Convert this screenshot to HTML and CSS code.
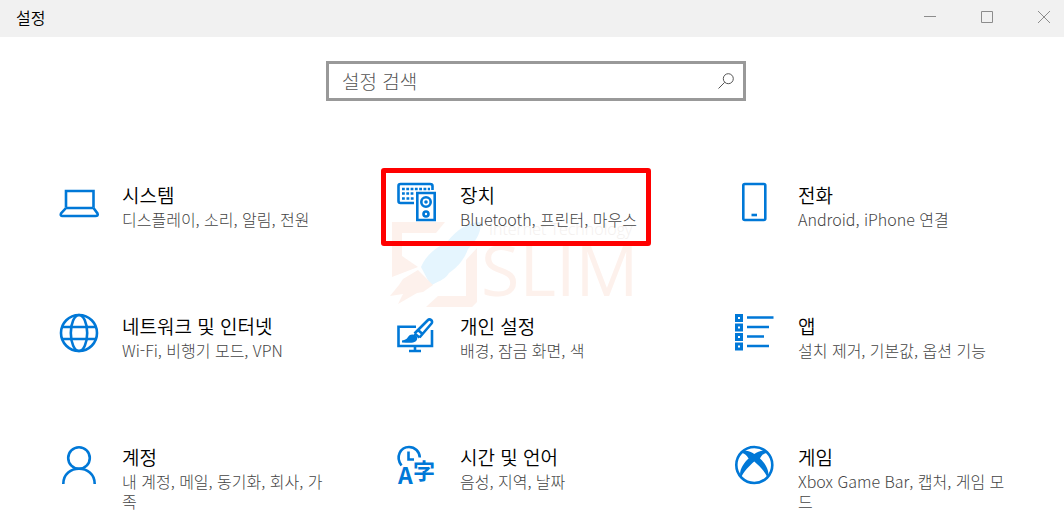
FILE: index.html
```html
<!DOCTYPE html>
<html lang="ko">
<head>
<meta charset="utf-8">
<meta name="viewport" content="width=device-width, initial-scale=1">
<title>설정</title>
<link rel="stylesheet" href="styles.css">
</head>
<body>
<header class="titlebar">
  <h1 class="titlebar-name">설정</h1>
  <div class="window-controls">
    <button class="window-button" type="button" aria-label="최소화"><svg viewBox="0 0 12 12"><path d="M0 5.5h12"/></svg></button>
    <button class="window-button" type="button" aria-label="최대화"><svg viewBox="0 0 12 12"><path d="M.5.5h11v11H.5z"/></svg></button>
    <button class="window-button" type="button" aria-label="닫기"><svg viewBox="0 0 12 12"><path d="M0 0l12 12M12 0L0 12"/></svg></button>
  </div>
</header>
<main>
  <form class="search" role="search">
    <input class="search-input" type="text" placeholder="설정 검색" aria-label="설정 검색">
    <button class="search-button" type="submit" aria-label="검색"><svg viewBox="0 0 16 16"><circle cx="10.3" cy="5.7" r="5"/><path d="M6.7 9.3L.5 15.5"/></svg></button>
  </form>
  <nav class="tiles" aria-label="설정 범주">
    <a class="tile" href="#system">
      <svg class="icon" viewBox="0 0 40 40"><path d="M7 25.5V9h27.5v16.5M7 26h27.5M7 26L2 31.5Q1 34 3.5 34h33Q39.5 34 38.500 31.5L34.5 26"/></svg>
      <span class="tile-text"><span class="tile-title">시스템</span><span class="tile-desc">디스플레이, 소리, 알림, 전원</span></span>
    </a>
    <a class="tile" href="#devices">
      <svg class="watermark" viewBox="0 0 260 90" aria-hidden="true">
        <path class="mark-warm" d="M3 2H56L47 13H13V36L29 47L3 57Z"/>
        <path class="mark-blue" d="M32 47C38 33 49 27 58 22C68 9 80 2 92 2C92 11 89 19 79 29C76 38 69 47 60 53C55 61 48 61 42 66Z"/>
        <path class="mark-warm" d="M29 50L44 65L34 72L28 73L9 84L14 74L1 76L10 65L14 59Z"/>
        <path class="mark-warm" d="M88 28V82L83 87H37L49 76H77V40Z"/>
        <text class="mark-caption" x="100" y="15">Internet Technology</text>
        <text class="mark-name" x="92" y="76">SLIM</text>
      </svg>
      <svg class="icon" viewBox="0 0 40 40"><path d="M17 21H3.500Q1.500 21 1.500 19V4Q1.500 2 3.500 2H33Q35.500 2 35.500 4V8"/><path d="M5 7H33M5 11.500H17M5 16.500H8M9.500 16.500H17" stroke-dasharray="2.800 1.500"/><path d="M20.300 11H37.700V38H20.300z"/><circle cx="29" cy="20" r="4.700"/><circle class="solid" cx="29" cy="20" r="1.800"/><circle cx="29" cy="32" r="2.500"/></svg>
      <span class="tile-text"><span class="tile-title">장치</span><span class="tile-desc">Bluetooth, 프린터, 마우스</span></span>
      <span class="highlight"></span>
    </a>
    <a class="tile" href="#phone">
      <svg class="icon" viewBox="0 0 40 40"><rect x="8.300" y="2" width="22" height="36" rx="1.500"/><path d="M16.500 33h5.500"/></svg>
      <span class="tile-text"><span class="tile-title">전화</span><span class="tile-desc">Android, iPhone 연결</span></span>
    </a>
    <a class="tile" href="#network">
      <svg class="icon" viewBox="0 0 40 40"><circle cx="20" cy="20" r="18"/><ellipse cx="20" cy="20" rx="8.200" ry="18"/><path d="M3 14h34M3 26h34"/></svg>
      <span class="tile-text"><span class="tile-title">네트워크 및 인터넷</span><span class="tile-desc">Wi-Fi, 비행기 모드, VPN</span></span>
    </a>
    <a class="tile" href="#personalization">
      <svg class="icon" viewBox="0 0 40 40"><path d="M19 13.700H1.500V33H35V17M18 33v5M12 38h12"/><path d="M17.500 20.500L30.500 7.500C33 5 36.500 8 34.500 10.500L22.500 24.500M17.500 20.500L22.500 24.500M21 17L25.500 21"/><path class="solid" d="M5 27.500C12 27 10 21.500 15.500 21.500C20 21.500 22 26 18.500 28.500C16 30.500 10 29.500 5 29.500Z"/></svg>
      <span class="tile-text"><span class="tile-title">개인 설정</span><span class="tile-desc">배경, 잠금 화면, 색</span></span>
    </a>
    <a class="tile" href="#apps">
      <svg class="icon" viewBox="0 0 40 40"><g class="thick"><path d="M1.500 2.500h5v5h-5zM1.500 12h5v5h-5zM1.500 21.500h5v5h-5zM1.500 31h5v5h-5z"/></g><path d="M12 4.500h26.500M12 14h22M12 23.500h17M12 33h22"/></svg>
      <span class="tile-text"><span class="tile-title">앱</span><span class="tile-desc">설치 제거, 기본값, 옵션 기능</span></span>
    </a>
    <a class="tile" href="#accounts">
      <svg class="icon" viewBox="0 0 40 40"><circle cx="20" cy="14" r="10.800"/><path d="M4.300 40C4.300 19.700 35.700 19.700 35.700 40"/></svg>
      <span class="tile-text"><span class="tile-title">계정</span><span class="tile-desc">내 계정, 메일, 동기화, 회사, 가족</span></span>
    </a>
    <a class="tile" href="#time">
      <svg class="icon" viewBox="0 0 40 40"><path d="M4.500 21.500C-2 13 3.500 3 12 3C18 3 22.500 7.500 22.800 13.500M11.500 7.500V15.500H17"/><text class="glyph-latin" x="1" y="40">A</text><text class="glyph-han" x="16" y="35">字</text></svg>
      <span class="tile-text"><span class="tile-title">시간 및 언어</span><span class="tile-desc">음성, 지역, 날짜</span></span>
    </a>
    <a class="tile" href="#gaming">
      <svg class="icon" viewBox="0 0 40 40"><circle cx="19.300" cy="21" r="18"/><path class="solid" d="M7.500 7.500C11 5.500 16 8 19.300 10C22.600 8 27.600 5.500 31 7.500L32 9C29 9 26.500 11.500 25 14.500C30.500 19.500 35.500 28 32.500 34C30.500 28 24 21.500 19.300 17.500C14.600 21.500 8 28 6 34C3 28 8 19.500 13.600 14.500C12 11.500 9.600 9 6.500 9Z"/></svg>
      <span class="tile-text"><span class="tile-title">게임</span><span class="tile-desc">Xbox Game Bar, 캡처, 게임 모드</span></span>
    </a>
  </nav>
</main>
</body>
</html>
```
FILE: styles.css
```css
* { box-sizing: border-box; }

body {
  margin: 0;
  background: #fff;
  color: #000;
  font-family: "Noto Sans CJK KR", sans-serif;
  font-weight: 300;
}

button { border: 0; padding: 0; background: none; }

.titlebar {
  display: flex;
  justify-content: space-between;
  align-items: flex-start;
  height: 37px;
  padding-left: 16px;
  background: #f1f1f1;
}

.titlebar-name {
  margin: 0;
  font-size: 16px;
  font-weight: 350;
  line-height: 34px;
}

.window-controls { display: flex; gap: 17px; }

.window-button {
  display: grid;
  place-items: center;
  width: 40px;
  height: 34px;
}

.window-button svg {
  width: 12px;
  height: 12px;
  fill: none;
  stroke: #8c8c8c;
}

.search {
  display: flex;
  align-items: center;
  width: 420px;
  max-width: 100%;
  height: 40px;
  margin: 24px auto 0;
  border: 3px solid #999;
  position: relative;
  left: 4px;
}

.search-input {
  flex: 1;
  min-width: 0;
  height: 34px;
  padding: 0 0 2px 13px;
  border: 0;
  outline: 0;
  background: none;
  font: inherit;
  font-size: 19px;
}

.search-input::placeholder { color: #555; opacity: 1; }

.search-button {
  display: grid;
  place-items: center;
  width: 34px;
  height: 34px;
}

.search-button svg {
  width: 16px;
  height: 16px;
  fill: none;
  stroke: #555;
}

.tiles {
  display: grid;
  grid-template-columns: repeat(3, 1fr);
  gap: 70px 48px;
  padding: 67px 55px 0 43px;
}

.tile {
  position: relative;
  display: flex;
  align-items: flex-start;
  gap: 23px;
  padding: 14px 0 0 16px;
  color: inherit;
  text-decoration: none;
}

.icon {
  position: relative;
  flex: none;
  width: 40px;
  height: 40px;
  overflow: visible;
  fill: none;
  stroke: #0078d7;
  stroke-width: 2.6;
}

.icon .solid { fill: #0078d7; stroke: none; }
.icon .thick { stroke-width: 3; }

.icon text {
  fill: #0078d7;
  stroke: none;
  font-weight: 700;
}

.glyph-latin { font-size: 23px; }
.glyph-han { font-size: 22px; }

.tile-text {
  position: relative;
  display: flex;
  flex-direction: column;
  gap: 1px;
}

.tile-title {
  font-size: 19px;
  font-weight: 350;
  line-height: 26px;
}

.tile-desc {
  color: #444;
  font-size: 16px;
  line-height: 20px;
}

.highlight {
  position: absolute;
  top: 0;
  left: 0;
  width: 270px;
  height: 78px;
  border: 5px solid #f00;
  border-radius: 3px;
}

.watermark {
  position: absolute;
  top: 52px;
  left: 8px;
  width: 260px;
  height: 90px;
  overflow: visible;
}

.mark-warm { fill: #fdf1ec; }
.mark-blue { fill: #e5f5fe; }

.mark-caption {
  fill: #f3efee;
  font-family: "Open Sans", sans-serif;
  font-size: 16px;
}

.mark-name {
  fill: #fdf1ec;
  font-family: "Open Sans", sans-serif;
  font-size: 70px;
  font-weight: 400;
}
```
